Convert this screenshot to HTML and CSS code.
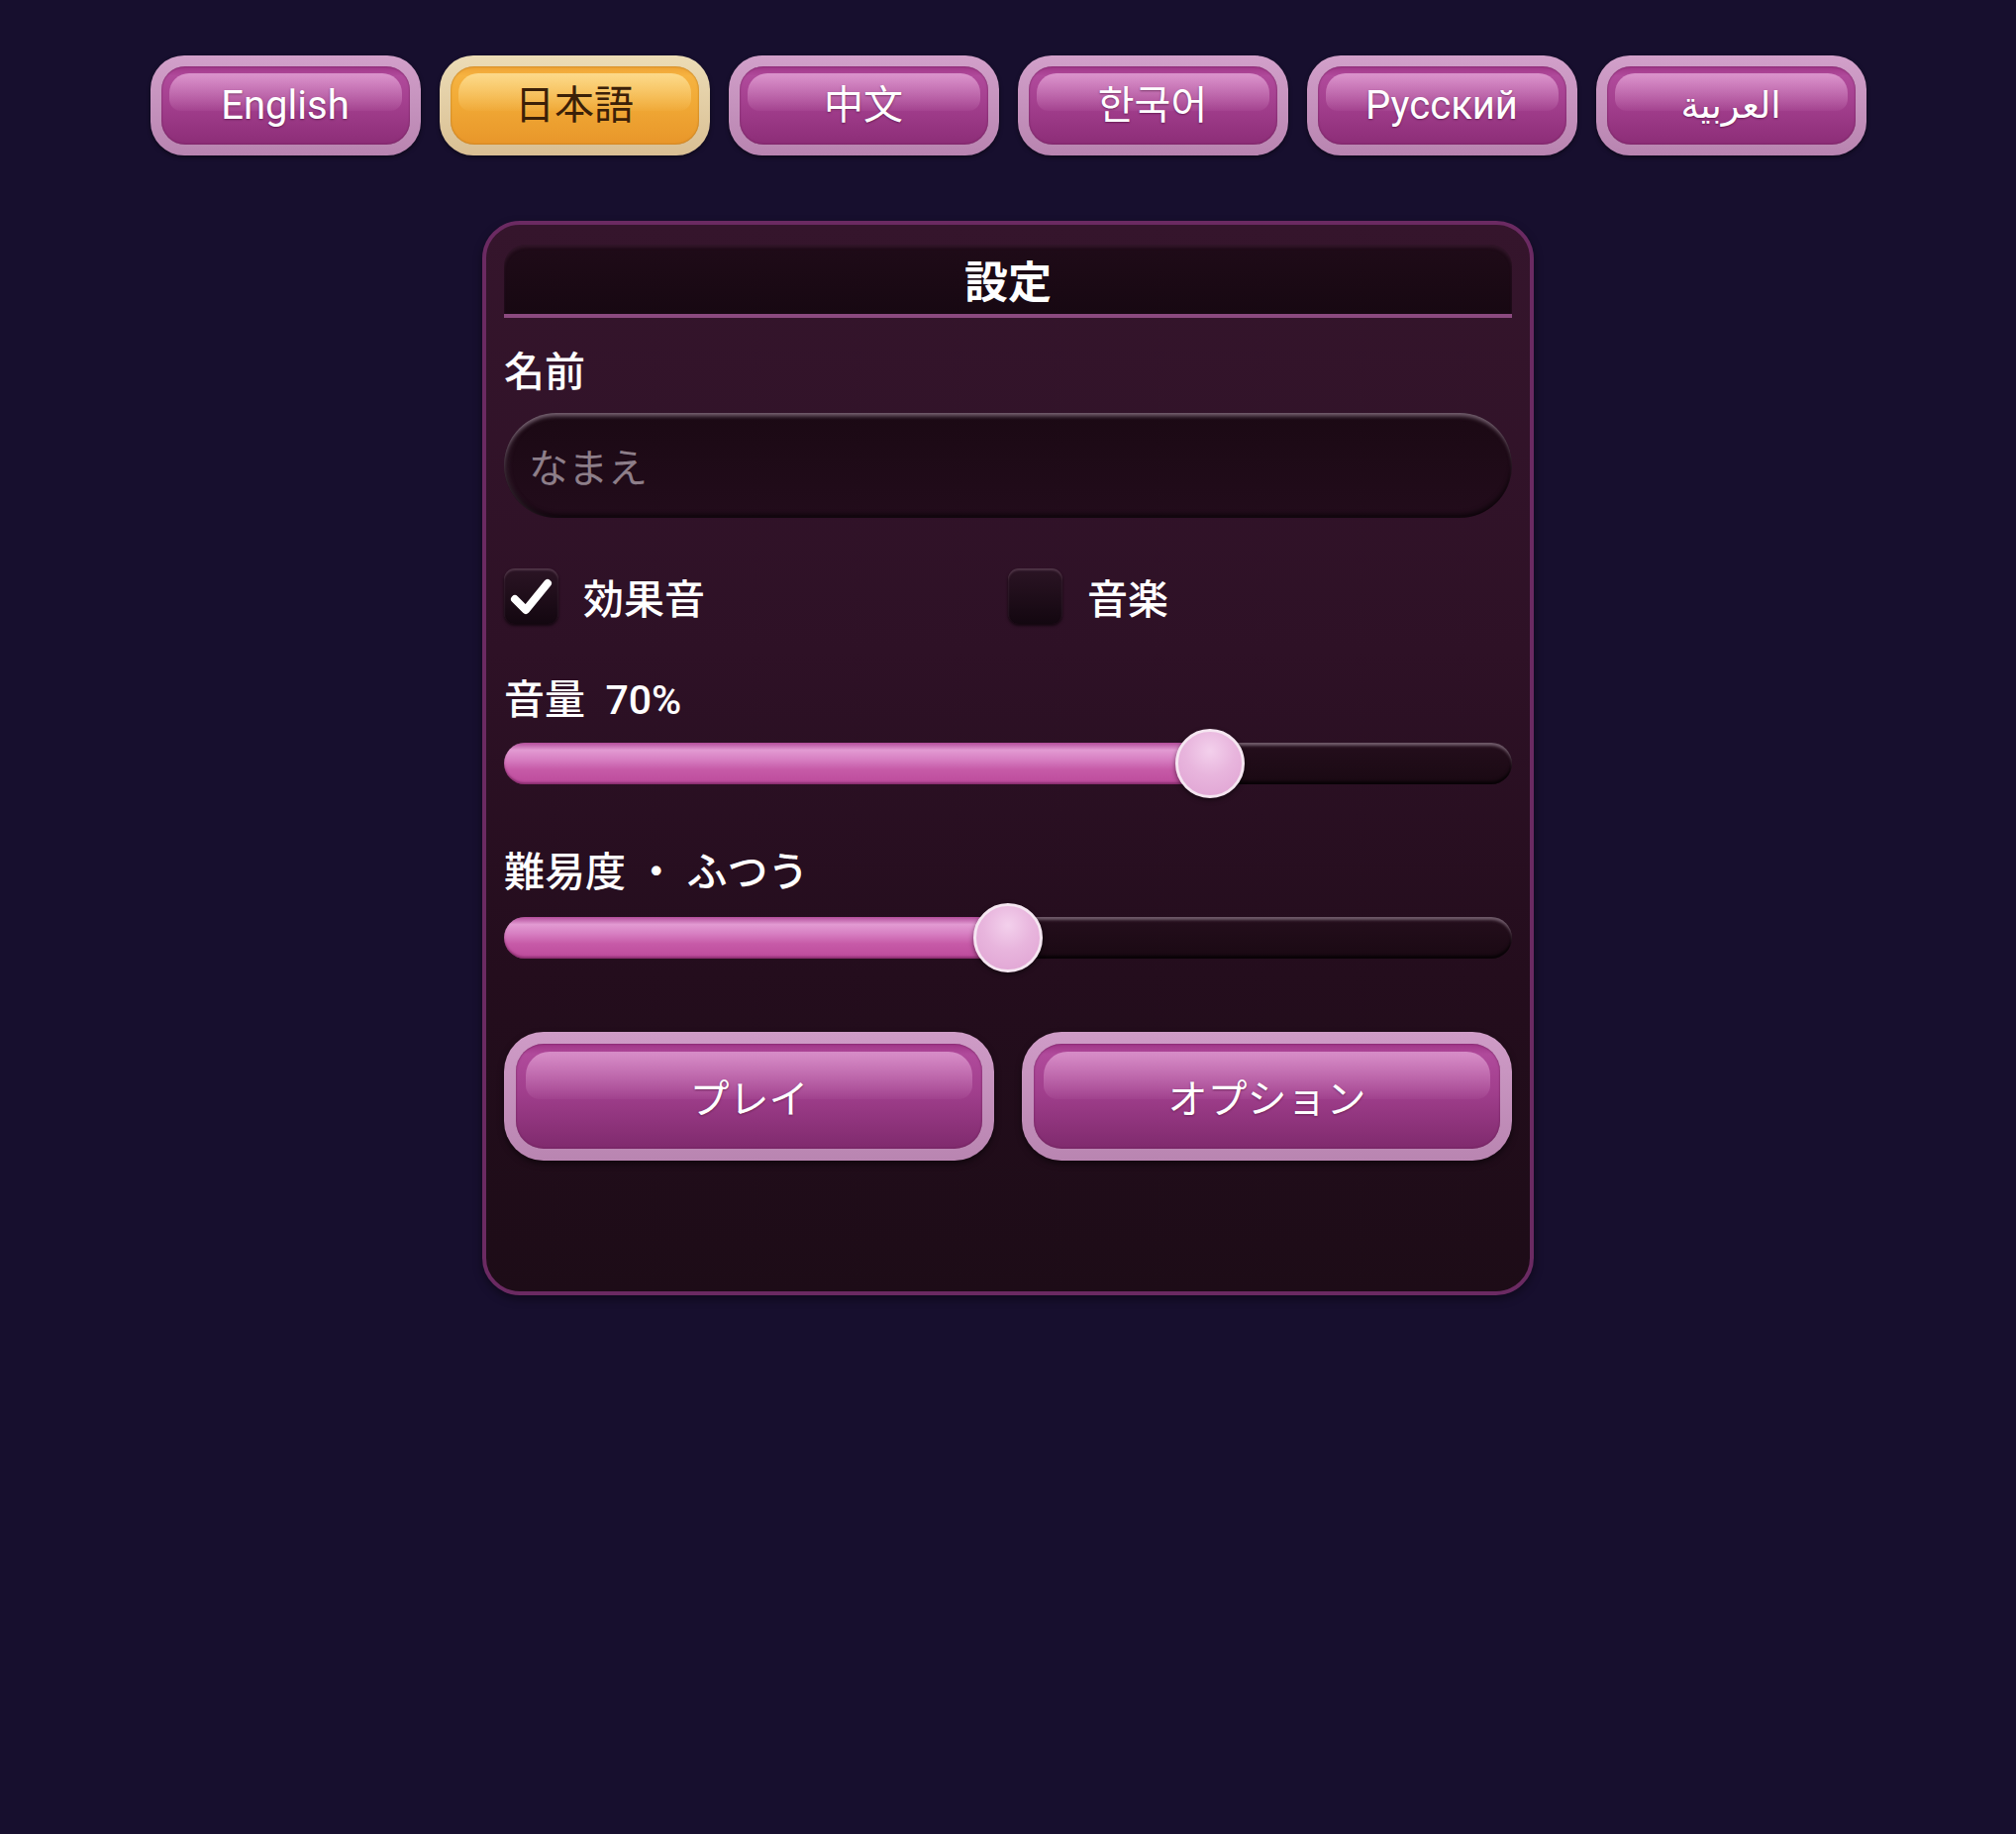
FILE: index.html
```html
<!DOCTYPE html>
<html lang="ja">
<head>
<meta charset="utf-8">
<title>設定</title>
<link rel="stylesheet" href="styles.css">
</head>
<body>
<nav class="lang-bar">
  <button class="lang-btn" lang="en"><span class="lang-inner">English</span></button>
  <button class="lang-btn lang-btn--active" lang="ja"><span class="lang-inner">日本語</span></button>
  <button class="lang-btn" lang="zh"><span class="lang-inner lang-zh">中文</span></button>
  <button class="lang-btn" lang="ko"><span class="lang-inner lang-ko">한국어</span></button>
  <button class="lang-btn" lang="ru"><span class="lang-inner">Русский</span></button>
  <button class="lang-btn" lang="ar"><span class="lang-inner lang-ar">العربية</span></button>
</nav>

<section class="panel">
  <header class="panel-head">設定</header>

  <label class="field-label">名前</label>
  <div class="name-input"><span class="placeholder">なまえ</span></div>

  <div class="check-row">
    <div class="check-item">
      <span class="checkbox checkbox--on">
        <svg viewBox="0 0 55 56" width="55" height="56"><polyline points="11,31 22,42 44,15" fill="none" stroke="#fff" stroke-width="8" stroke-linecap="round" stroke-linejoin="round"/></svg>
      </span>
      <span class="check-label">効果音</span>
    </div>
    <div class="check-item">
      <span class="checkbox"></span>
      <span class="check-label">音楽</span>
    </div>
  </div>

  <div class="field-label field-label--vol">音量&nbsp; 70%</div>
  <div class="slider">
    <div class="track">
      <div class="fill" style="width:70%"></div>
      <div class="thumb" style="left:70%"></div>
    </div>
  </div>

  <div class="field-label field-label--diff">難易度 ・ ふつう</div>
  <div class="slider">
    <div class="track">
      <div class="fill" style="width:50%"></div>
      <div class="thumb" style="left:50%"></div>
    </div>
  </div>

  <div class="actions">
    <button class="big-btn"><span class="big-inner">プレイ</span></button>
    <button class="big-btn"><span class="big-inner">オプション</span></button>
  </div>
</section>
</body>
</html>
```

FILE: styles.css
```css
html {
  background: #170f2e;
}
body {
  margin: 0;
  min-height: 1852px;
  background: #170f2e;
  font-family: Roboto, "Noto Sans CJK JP", "DejaVu Sans", sans-serif;
  color: #fff;
}

/* language bar */
.lang-bar {
  display: flex;
  justify-content: center;
  gap: 19px;
  padding-top: 56px;
}
.lang-btn {
  width: 273px;
  height: 101px;
  box-sizing: border-box;
  padding: 11px;
  border: none;
  border-radius: 34px;
  background: linear-gradient(#d2a0ca, #b884b0);
  box-shadow: 0 2px 4px rgba(0,0,0,0.45);
  display: flex;
  font-family: inherit;
  cursor: pointer;
}
.lang-inner {
  position: relative;
  z-index: 0;
  flex: 1;
  display: flex;
  align-items: center;
  justify-content: center;
  border-radius: 24px;
  background: linear-gradient(#a03688 0%, #b04a9b 12%, #a4408f 45%, #8c2d77 100%);
  box-shadow: inset 0 0 2px rgba(90,20,70,0.8);
  color: #fff;
  font-size: 40px;
  line-height: 1;
  text-shadow: 0 1px 2px rgba(60,0,40,0.5);
  overflow: hidden;
}
.lang-inner::before {
  content: "";
  position: absolute;
  z-index: -1;
  left: 8px;
  right: 8px;
  top: 7px;
  height: 48%;
  border-radius: 20px 20px 12px 12px;
  background: linear-gradient(rgba(255,210,245,0.55), rgba(255,200,240,0.05));
}
.lang-zh { font-family: Roboto, "Noto Sans CJK SC", sans-serif; }
.lang-ko { font-family: Roboto, "Noto Sans CJK KR", sans-serif; }
.lang-ar { font-family: "DejaVu Sans", sans-serif; font-size: 37px; }

.lang-btn--active {
  background: linear-gradient(#ecdcb6, #d9bf93);
}
.lang-btn--active .lang-inner {
  background: linear-gradient(#eea233 0%, #f6b341 12%, #f1aa36 45%, #e8962a 100%);
  color: #3b2008;
  text-shadow: none;
  box-shadow: inset 0 0 2px rgba(150,90,10,0.8);
}
.lang-btn--active .lang-inner::before {
  background: linear-gradient(rgba(255,235,170,0.7), rgba(255,220,140,0.05));
}

/* panel */
.panel {
  width: 1062px;
  box-sizing: border-box;
  margin: 66px auto 0;
  padding: 20px 18px 132px;
  border: 4px solid #6b2a62;
  border-radius: 38px;
  background: linear-gradient(#35152c 0%, #2e1126 40%, #240d1d 70%, #1d0c17 100%);
  box-shadow: 0 4px 10px rgba(0,0,0,0.4);
}
.panel-head {
  height: 70px;
  border-radius: 22px 22px 0 0;
  border-bottom: 4px solid #8b4a7f;
  background: linear-gradient(#1f0b18, #170812);
  box-shadow: inset 0 3px 3px rgba(80,40,70,0.35);
  display: flex;
  align-items: center;
  justify-content: center;
  font-size: 44px;
  font-weight: 700;
  font-family: "Noto Sans CJK JP", sans-serif;
}

.field-label {
  display: block;
  margin-top: 30px;
  height: 50px;
  line-height: 50px;
  font-size: 41px;
  font-weight: 500;
  font-family: Roboto, "Noto Sans CJK JP", sans-serif;
}

.name-input {
  margin-top: 16px;
  height: 106px;
  border-radius: 53px;
  background: linear-gradient(#1b0914, #220c1b);
  box-shadow:
    inset 0 5px 4px -2px rgba(150,130,145,0.75),
    inset 6px 0 6px -4px rgba(120,100,115,0.4),
    inset 0 -4px 4px rgba(0,0,0,0.55);
  display: flex;
  align-items: center;
  padding-left: 25px;
}
.placeholder {
  font-size: 40px;
  color: #8d7e89;
  font-family: "Noto Sans CJK JP", sans-serif;
}

.check-row {
  margin-top: 51px;
  display: grid;
  grid-template-columns: 1fr 1fr;
}
.check-item {
  display: flex;
  align-items: center;
  gap: 25px;
}
.checkbox {
  width: 55px;
  height: 56px;
  border-radius: 11px;
  background: linear-gradient(#2b1424, #130710);
  box-shadow: inset 0 2px 2px rgba(120,90,110,0.5), 0 2px 3px rgba(0,0,0,0.6);
  display: block;
}
.checkbox svg {
  display: block;
}
.check-label {
  font-size: 41px;
  font-weight: 500;
  font-family: "Noto Sans CJK JP", sans-serif;
  line-height: 56px;
}

.field-label--vol {
  margin-top: 52px;
}
.field-label--diff {
  margin-top: 50px;
}

.slider {
  margin-top: 4px;
  height: 70px;
  display: flex;
  align-items: center;
}
.field-label--diff + .slider {
  margin-top: 6px;
}
.track {
  position: relative;
  flex: 1;
  height: 42px;
  border-radius: 21px;
  background: linear-gradient(#240e1c, #1a0913);
  box-shadow:
    inset 0 4px 3px -1px rgba(130,110,125,0.8),
    inset 0 -3px 3px rgba(0,0,0,0.7);
}
.fill {
  height: 100%;
  border-radius: 21px 0 0 21px;
  background: linear-gradient(#b24c9a 0%, #e29ad2 18%, #d77fc2 40%, #c65aa7 65%, #bc4a9b 100%);
  box-shadow: inset 0 -2px 2px rgba(90,20,70,0.5);
}
.thumb {
  position: absolute;
  top: 50%;
  width: 70px;
  height: 70px;
  box-sizing: border-box;
  margin: -35px 0 0 -35px;
  border-radius: 50%;
  border: 3px solid #f5e6f1;
  background: radial-gradient(circle at 50% 30%, #f3d0ec 0%, #e8b5dd 45%, #dfa2d2 100%);
  box-shadow: 0 2px 5px rgba(0,0,0,0.5);
}

.actions {
  margin-top: 60px;
  display: grid;
  grid-template-columns: 1fr 1fr;
  gap: 28px;
}
.big-btn {
  height: 130px;
  box-sizing: border-box;
  padding: 12px;
  border: none;
  border-radius: 40px;
  background: linear-gradient(#cf9cc7, #b985b1);
  box-shadow: 0 3px 6px rgba(0,0,0,0.5);
  display: flex;
  font-family: inherit;
  cursor: pointer;
}
.big-inner {
  position: relative;
  z-index: 0;
  flex: 1;
  display: flex;
  align-items: center;
  justify-content: center;
  border-radius: 28px;
  background: linear-gradient(#9f3587 0%, #b04a9b 10%, #a13f8d 45%, #7f2a6d 100%);
  box-shadow: inset 0 0 2px rgba(90,20,70,0.8);
  color: #fff;
  font-size: 40px;
  font-family: "Noto Sans CJK JP", sans-serif;
  text-shadow: 0 1px 2px rgba(60,0,40,0.5);
  overflow: hidden;
}
.big-inner::before {
  content: "";
  position: absolute;
  z-index: -1;
  left: 10px;
  right: 10px;
  top: 8px;
  height: 45%;
  border-radius: 24px 24px 14px 14px;
  background: linear-gradient(rgba(255,210,245,0.5), rgba(255,200,240,0.04));
}
```
